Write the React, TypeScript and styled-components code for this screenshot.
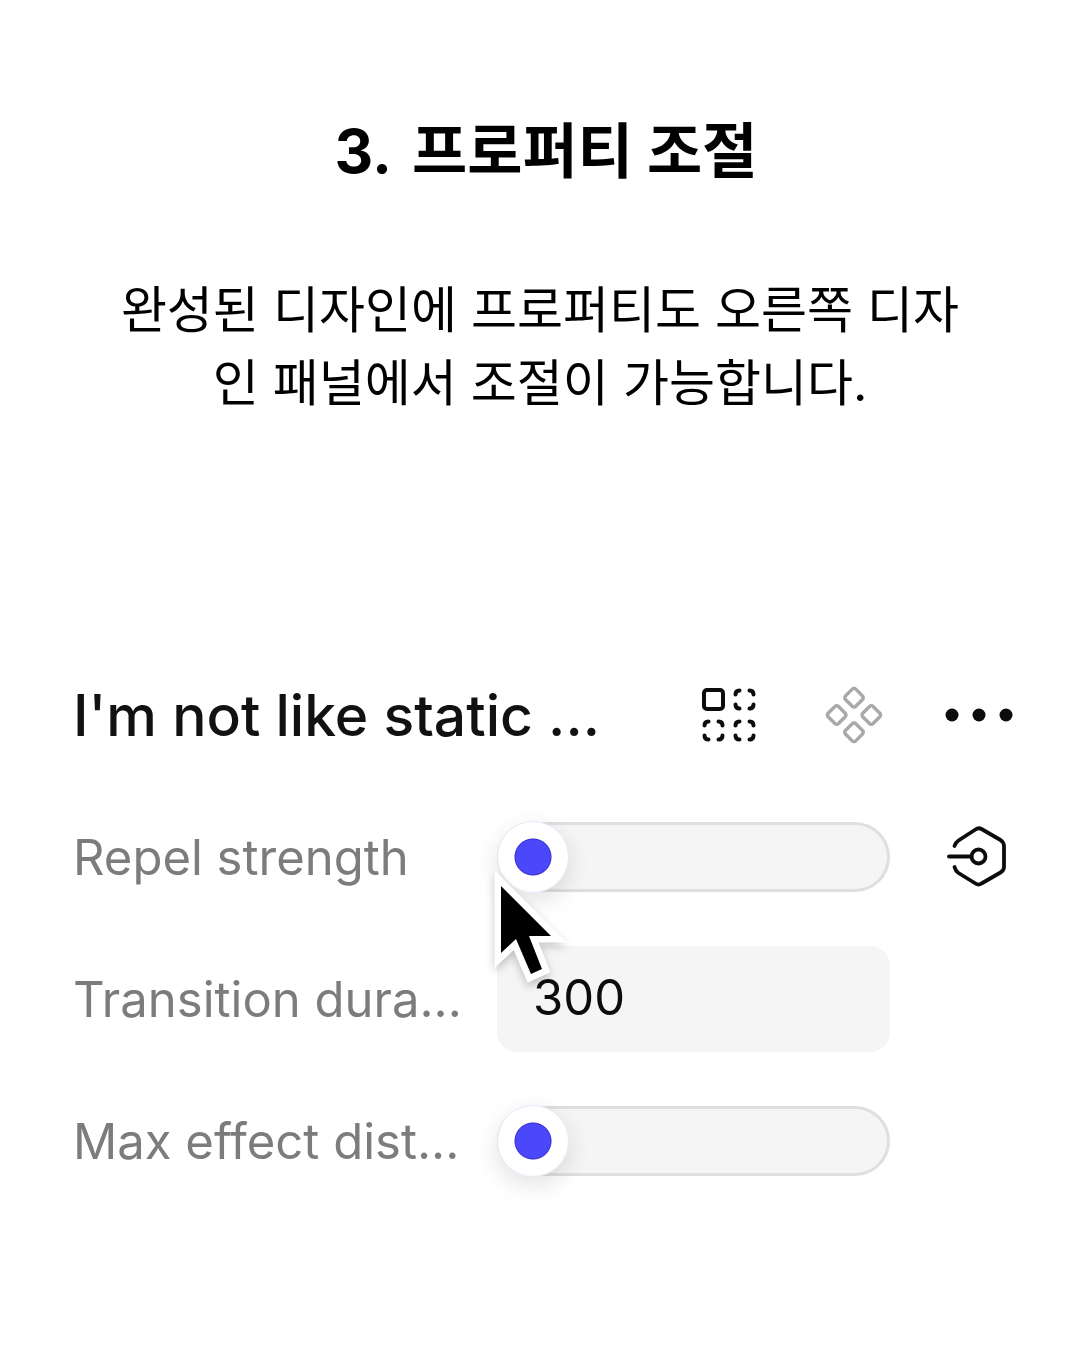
import React, { useState } from "react";
import styled, { createGlobalStyle } from "styled-components";

const GlobalStyle = createGlobalStyle`
  * { box-sizing: border-box; }
  body {
    margin: 0;
    background: #fff;
    color: #000;
    font-family: Inter, "Noto Sans CJK KR", sans-serif;
  }
`;

const Page = styled.main`
  padding: 106px 62px 64px 73px;
`;

const Intro = styled.header`
  padding: 0 36px 0 25px;
  text-align: center;
`;

const Title = styled.h1`
  display: flex;
  justify-content: center;
  gap: 20px;
  margin: 0 0 78px;
  padding-left: 12px;
  font-size: 60px;
  line-height: 90px;
  font-weight: 700;
`;

const Lead = styled.p`
  margin: 0;
  font-size: 50px;
  line-height: 73px;
  word-break: break-all;
`;

const Panel = styled.section`
  display: flex;
  flex-direction: column;
  gap: 36px;
  margin-top: 242px;
  font-optical-sizing: none;
  font-variant-ligatures: none;
`;

const PanelHeader = styled.div`
  display: flex;
  align-items: center;
  gap: 47px;
  height: 106px;
`;

const PanelTitle = styled.h2`
  flex: 1;
  margin: 0;
  padding-top: 2px;
  color: #111;
  font-size: 57px;
  line-height: 72px;
  font-weight: 500;
  white-space: nowrap;
`;

const IconButton = styled.button<{ $muted?: boolean }>`
  display: grid;
  place-items: center;
  justify-self: end;
  width: 78px;
  height: 78px;
  padding: 0;
  border: 0;
  background: none;
  color: ${(p) => (p.$muted ? "#a9a9a9" : "#0c0c0c")};
  cursor: pointer;
`;

const Row = styled.div`
  display: grid;
  grid-template-columns: minmax(0, 424fr) minmax(0, 393fr) 128px;
  align-items: center;
  height: 106px;
`;

const Label = styled.label`
  padding-top: 2px;
  color: #7c7c7c;
  font-size: 49px;
  line-height: 64px;
  white-space: nowrap;
`;

const Control = styled.div`
  position: relative;
  display: flex;
`;

const Slider = styled.input`
  appearance: none;
  width: 100%;
  height: 72px;
  margin: 0;
  background: none;

  &::-webkit-slider-runnable-track {
    height: 70px;
    border-radius: 35px;
    background: #f5f5f5;
    box-shadow: inset 0 0 0 3px #dfdfdf;
  }

  &::-webkit-slider-thumb {
    appearance: none;
    width: 72px;
    height: 72px;
    margin-top: -1px;
    border: 1px solid #e9e7fb;
    border-radius: 50%;
    background: radial-gradient(circle, #4b48fb 17px, #3a30d0 18px, #fff 19px);
    box-shadow: 0 8px 24px rgba(0, 0, 0, 0.12);
  }
`;

const NumberField = styled.input`
  width: 100%;
  height: 106px;
  padding: 0 36px 4px;
  border: 0;
  border-radius: 20px;
  background: #f5f5f5;
  color: #0c0c0c;
  font-family: inherit;
  font-size: 49px;
  font-optical-sizing: none;
`;

const Pointer = styled.svg`
  position: absolute;
  top: 40px;
  left: -18px;
  z-index: 1;
  pointer-events: none;
  filter: drop-shadow(0 4px 4px rgba(0, 0, 0, 0.22));
`;

const VariantsIcon = () => {
  const dashed = (x: number, y: number) => (
    <path
      key={`${x}-${y}`}
      transform={`translate(${x} ${y})`}
      d="M2 6Q2 2 6 2M16 2Q20 2 20 6M20 16Q20 20 16 20M6 20Q2 20 2 16"
    />
  );
  return (
    <svg width="56" height="56" viewBox="0 0 56 56" fill="none" stroke="currentColor" strokeWidth="4" strokeLinecap="round" aria-hidden="true">
      <rect x="3" y="3" width="19" height="19" rx="3" />
      {dashed(32.5, 1.5)}
      {dashed(1.5, 32.5)}
      {dashed(32.5, 32.5)}
    </svg>
  );
};

const ComponentIcon = () => (
  <svg width="60" height="60" viewBox="-30 -30 60 60" fill="none" stroke="currentColor" strokeWidth="3.400" aria-hidden="true">
    {[[0, -17.3], [17.3, 0], [0, 17.3], [-17.3, 0]].map(([x, y]) => (
      <rect key={`${x}${y}`} x="-7.300" y="-7.300" width="14.600" height="14.600" rx="2.500" transform={`translate(${x} ${y}) rotate(45)`} />
    ))}
  </svg>
);

const MoreIcon = () => (
  <svg width="68" height="14" viewBox="0 0 68 14" fill="currentColor" aria-hidden="true">
    <circle cx="7" cy="7" r="6.500" />
    <circle cx="34" cy="7" r="6.500" />
    <circle cx="61" cy="7" r="6.500" />
  </svg>
);

const VariableIcon = () => (
  <svg width="64" height="64" viewBox="0 0 64 64" fill="none" stroke="currentColor" strokeWidth="3.800" strokeLinecap="round" strokeLinejoin="round" aria-hidden="true">
    <path d="M7.500 21Q8.500 17.500 11.500 15.500L28.500 4.500Q31.500 2.300 34.500 4L53.500 15Q57 17.500 57 21V42Q57 45.500 53.500 47.500L34.500 58.500Q31.500 60.500 28.500 58.500L11.500 48Q8.500 46 7.500 42" />
    <path d="M2 31.500H24.500" />
    <circle cx="31.500" cy="31.500" r="7" />
  </svg>
);

export default function App() {
  const [repel, setRepel] = useState(0);
  const [duration, setDuration] = useState("300");
  const [distance, setDistance] = useState(0);

  return (
    <>
      <GlobalStyle />
      <Page>
        <Intro>
          <Title>
            <span>3.</span>
            <span>프로퍼티 조절</span>
          </Title>
          <Lead>완성된 디자인에 프로퍼티도 오른쪽 디자인 패널에서 조절이 가능합니다.</Lead>
        </Intro>

        <Panel>
          <PanelHeader>
            <PanelTitle>I'm not like static ...</PanelTitle>
            <IconButton type="button" aria-label="Variants">
              <VariantsIcon />
            </IconButton>
            <IconButton type="button" aria-label="Component" $muted>
              <ComponentIcon />
            </IconButton>
            <IconButton type="button" aria-label="More">
              <MoreIcon />
            </IconButton>
          </PanelHeader>

          <Row>
            <Label htmlFor="repel">Repel strength</Label>
            <Control>
              <Slider id="repel" type="range" min={0} max={100} value={repel} onChange={(e) => setRepel(Number(e.target.value))} />
              <Pointer width="100" height="130" viewBox="0 0 100 130" aria-hidden="true">
                <path
                  d="M22 25V92L37 78L52 113L63 108L50 75H72Z"
                  fill="#000"
                  stroke="#fff"
                  strokeWidth="13"
                  strokeMiterlimit="8"
                  paintOrder="stroke"
                />
              </Pointer>
            </Control>
            <IconButton type="button" aria-label="Apply variable">
              <VariableIcon />
            </IconButton>
          </Row>

          <Row>
            <Label htmlFor="duration">Transition dura...</Label>
            <Control>
              <NumberField id="duration" type="text" inputMode="numeric" value={duration} onChange={(e) => setDuration(e.target.value)} />
            </Control>
          </Row>

          <Row>
            <Label htmlFor="distance">Max effect dist...</Label>
            <Control>
              <Slider id="distance" type="range" min={0} max={100} value={distance} onChange={(e) => setDistance(Number(e.target.value))} />
            </Control>
          </Row>
        </Panel>
      </Page>
    </>
  );
}
